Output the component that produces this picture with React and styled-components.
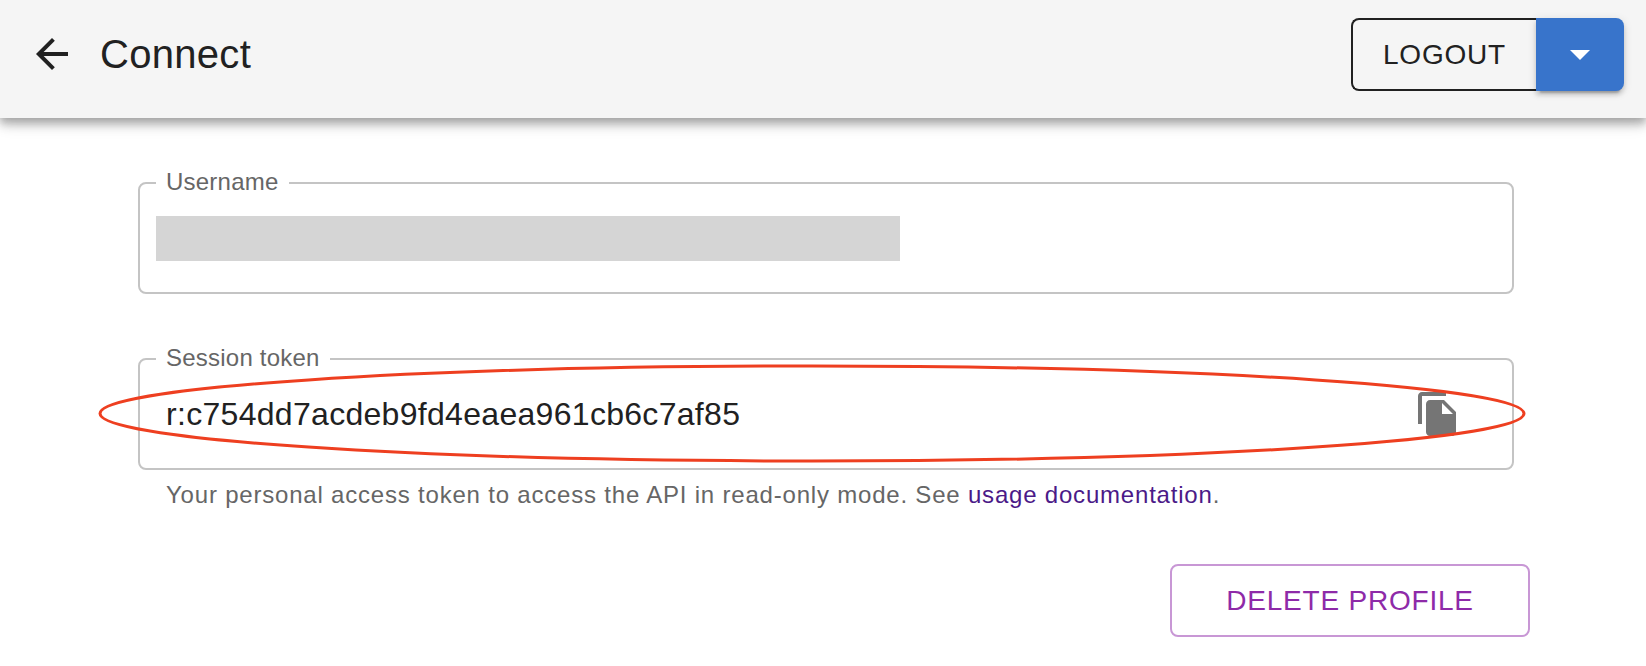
import React from "react";
import styled, { createGlobalStyle } from "styled-components";

const GlobalStyle = createGlobalStyle`
  *, *::before, *::after { box-sizing: border-box; }
  body {
    margin: 0;
    background: #fff;
    color: #212121;
    font-family: "Liberation Sans", Arial, Helvetica, sans-serif;
  }
`;

const Header = styled.header`
  display: flex;
  align-items: center;
  gap: 24px;
  padding: 18px 22px 27px 28px;
  background: #f5f5f5;
  box-shadow: 0 4px 8px 0 rgba(0, 0, 0, 0.2), 0 8px 10px rgba(0, 0, 0, 0.14),
    0 2px 20px rgba(0, 0, 0, 0.12);
`;

const IconButton = styled.button`
  display: flex;
  padding: 0;
  border: 0;
  background: none;
  color: ${(p) => p.$color};
  cursor: pointer;
`;

const BackButton = styled(IconButton)`
  padding-bottom: 1px;
`;

const Icon = styled.svg`
  display: block;
  width: 48px;
  height: 48px;
  fill: currentColor;
`;

const Title = styled.h1`
  flex: 1;
  margin: 0;
  padding-bottom: 1px;
  font-size: 40px;
  font-weight: 400;
  line-height: 48px;
  letter-spacing: 0.0075em;
`;

const ButtonGroup = styled.div`
  display: flex;
`;

const Button = styled.button`
  height: 73px;
  padding: 0 30px;
  border: 2px solid ${(p) => p.$border};
  border-radius: 8px;
  background: transparent;
  color: ${(p) => p.$color};
  font-family: inherit;
  font-size: 28px;
  line-height: 48px;
  letter-spacing: 0.02857em;
  text-transform: uppercase;
  cursor: pointer;
`;

const LogoutButton = styled(Button)`
  border-right: 0;
  border-radius: 8px 0 0 8px;
`;

const MenuButton = styled.button`
  display: flex;
  align-items: center;
  justify-content: center;
  width: 88px;
  padding: 0 0 1px;
  border: 0;
  border-radius: 0 8px 8px 0;
  background: #3874cb;
  color: #fff;
  box-shadow: 0 6px 2px -4px rgba(0, 0, 0, 0.2), 0 4px 4px rgba(0, 0, 0, 0.14),
    0 2px 10px rgba(0, 0, 0, 0.12);
  cursor: pointer;
`;

const Form = styled.form`
  display: flex;
  flex-direction: column;
  padding: 53px 116px 29px 122px;
`;

const Field = styled.div`
  position: relative;
  margin: 0 16px;
`;

const TokenField = styled(Field)`
  margin-top: 53px;
`;

const Outline = styled.fieldset`
  min-width: 0;
  margin: 0;
  padding: 0 50px 0 16px;
  border: 2px solid #c4c4c4;
  border-radius: 8px;
`;

const Legend = styled.legend`
  padding: 0 10px 2px;
  color: #666;
  font-size: 24px;
  line-height: 22px;
  letter-spacing: 0.00938em;
`;

const Control = styled.div`
  position: relative;
  display: flex;
  align-items: center;
  height: 97px;
  padding-bottom: 12px;
`;

const Input = styled.input`
  flex: 1;
  min-width: 0;
  height: 46px;
  padding: 2px 10px 0;
  border: 0;
  outline: 0;
  background: transparent;
  color: #212121;
  font-family: inherit;
  font-size: 32px;
  letter-spacing: 0.00938em;
`;

const Redaction = styled.div`
  position: absolute;
  top: 21px;
  left: 0;
  width: 57%;
  height: 45px;
  background: #d5d5d5;
`;

const HelperText = styled.p`
  margin: 5px 28px 0;
  color: #666;
  font-size: 24px;
  line-height: 40px;
  letter-spacing: 0.03333em;
`;

const Link = styled.a`
  color: #4b1a88;
  text-decoration: none;
`;

const Highlight = styled.svg`
  position: absolute;
  top: 19px;
  left: -38px;
  width: calc(100% + 48px);
  height: 95px;
  overflow: visible;
  pointer-events: none;
`;

const Actions = styled.div`
  display: flex;
  justify-content: flex-end;
  margin-top: 49px;
`;

const DeleteButton = styled(Button)`
  min-width: 360px;
`;

export default function App() {
  return (
    <>
      <GlobalStyle />
      <Header>
        <BackButton type="button" aria-label="Back" $color="#212121">
          <Icon viewBox="0 0 24 24">
            <path d="M20 11H7.83l5.59-5.59L12 4l-8 8 8 8 1.41-1.41L7.83 13H20v-2z" />
          </Icon>
        </BackButton>
        <Title>Connect</Title>
        <ButtonGroup>
          <LogoutButton type="button" $border="#212121" $color="#212121">
            Logout
          </LogoutButton>
          <MenuButton type="button" aria-label="More options">
            <Icon viewBox="0 0 24 24">
              <path d="M7 10l5 5 5-5z" />
            </Icon>
          </MenuButton>
        </ButtonGroup>
      </Header>
      <Form onSubmit={(e) => e.preventDefault()}>
        <Field>
          <Outline>
            <Legend>
              <label htmlFor="username">Username</label>
            </Legend>
            <Control>
              <Input id="username" type="text" readOnly value="" />
              <Redaction />
            </Control>
          </Outline>
        </Field>
        <TokenField>
          <Outline>
            <Legend>
              <label htmlFor="token">Session token</label>
            </Legend>
            <Control>
              <Input
                id="token"
                type="text"
                readOnly
                value="r:c754dd7acdeb9fd4eaea961cb6c7af85"
                aria-describedby="token-help"
              />
              <IconButton type="button" aria-label="Copy token" $color="#757575">
                <Icon viewBox="0 0 24 24">
                  <path d="M16 1H4c-1.1 0-2 .9-2 2v14h2V3h12V1zm-1 4l6 6v10c0 1.1-.9 2-2 2H7.99C6.89 23 6 22.1 6 21l.01-14c0-1.1.89-2 1.99-2h7zm-1 7h5.5L14 6.5V12z" />
                </Icon>
              </IconButton>
            </Control>
          </Outline>
          <HelperText id="token-help">
            Your personal access token to access the API in read-only mode. See{" "}
            <Link href="#docs">usage documentation</Link>.
          </HelperText>
          <Highlight aria-hidden="true">
            <ellipse
              cx="50%"
              cy="50%"
              rx="50%"
              ry="50%"
              fill="none"
              stroke="#ee3f20"
              strokeWidth="3"
            />
          </Highlight>
        </TokenField>
        <Actions>
          <DeleteButton type="button" $border="#c897d5" $color="#8e2aa8">
            Delete profile
          </DeleteButton>
        </Actions>
      </Form>
    </>
  );
}
